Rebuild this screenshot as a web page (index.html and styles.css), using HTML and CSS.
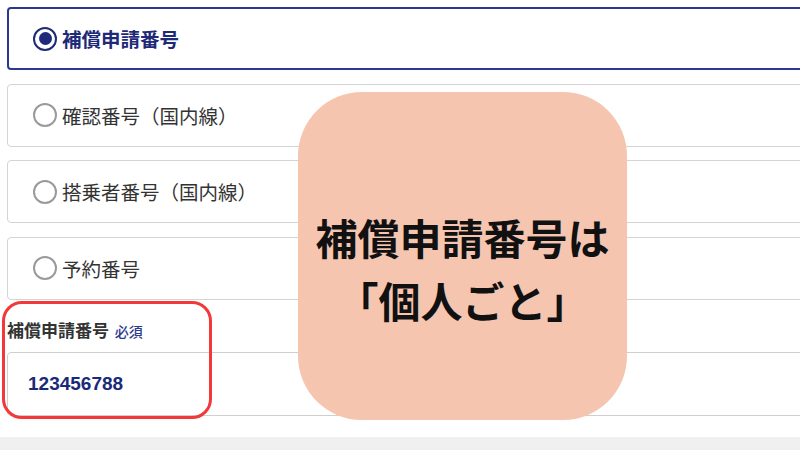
FILE: index.html
```html
<!DOCTYPE html>
<html lang="ja">
  <head>
    <meta charset="UTF-8" />
    <meta name="viewport" content="width=device-width, initial-scale=1.0" />
    <title>補償申請番号</title>
    <link rel="stylesheet" href="styles.css">
  </head>
  <body>
    <div class="page">
      <div class="form-area">
        <div class="options">
          <label class="option selected">
            <span class="radio checked"></span>
            <span class="option-text">補償申請番号</span>
          </label>
          <label class="option">
            <span class="radio"></span>
            <span class="option-text">確認番号（国内線）</span>
          </label>
          <label class="option">
            <span class="radio"></span>
            <span class="option-text">搭乗者番号（国内線）</span>
          </label>
          <label class="option">
            <span class="radio"></span>
            <span class="option-text">予約番号</span>
          </label>
        </div>

        <div class="field">
          <div class="field-label">補償申請番号 <span class="required">必須</span></div>
          <div class="input-box">123456788</div>
        </div>
      </div>
      <div class="footer-band"></div>

      <!-- annotations over the screenshot -->
      <div class="highlight-box"></div>
      <div class="note-bubble">
        <p>補償申請番号は<br>「個人ごと」</p>
      </div>
    </div>
  </body>
</html>
```

FILE: styles.css
```css
body {
  margin: 0;
  font-family: "Noto Sans CJK JP", "Noto Sans", sans-serif;
  background: #ffffff;
}
.page {
  position: relative;
  width: 800px;
  height: 450px;
  overflow: hidden;
}
.form-area {
  height: 437px;
  padding: 7px 0 0 7px;
  box-sizing: border-box;
}
.options {
  display: flex;
  flex-direction: column;
  gap: 13.5px;
  margin-right: -30px;
}
.option {
  display: flex;
  align-items: center;
  height: 63px;
  box-sizing: border-box;
  border: 1px solid #d4d4d4;
  border-radius: 4px;
  padding-left: 25px;
  color: #333;
  font-size: 19.5px;
}
.option.selected {
  border: 2px solid #2b3a8f;
  padding-left: 24px;
  color: #1e2a78;
  font-weight: 700;
}
.radio {
  width: 24px;
  height: 24px;
  box-sizing: border-box;
  border: 2px solid #9a9a9a;
  border-radius: 50%;
  margin-right: 5px;
  flex-shrink: 0;
  display: flex;
  align-items: center;
  justify-content: center;
}
.radio.checked {
  border: 2.5px solid #1e2a78;
}
.radio.checked::after {
  content: "";
  width: 13px;
  height: 13px;
  border-radius: 50%;
  background: #1e2a78;
}
.field {
  margin-top: 18px;
  margin-right: -30px;
}
.field-label {
  font-size: 17px;
  font-weight: 700;
  color: #333;
  line-height: 23px;
}
.required {
  font-size: 14px;
  color: #2b3a8f;
  font-weight: 500;
  margin-left: 2px;
}
.input-box {
  margin-top: 9px;
  height: 64px;
  box-sizing: border-box;
  border: 1px solid #cfcfcf;
  border-radius: 4px;
  display: flex;
  align-items: center;
  padding-left: 20px;
  font-family: "Liberation Sans", Arial, sans-serif;
  font-weight: 700;
  font-size: 19px;
  color: #1a2a7a;
}
.footer-band {
  height: 13px;
  background: #f0f0f0;
}
.highlight-box {
  position: absolute;
  left: 2px;
  top: 301px;
  width: 210px;
  height: 118px;
  box-sizing: border-box;
  border: 3.5px solid #f23838;
  border-radius: 20px;
}
.note-bubble {
  position: absolute;
  left: 298px;
  top: 92px;
  width: 329px;
  height: 328px;
  border-radius: 64px;
  background: #f5c5b0;
  display: flex;
  align-items: center;
  justify-content: center;
  padding-top: 24px;
  box-sizing: border-box;
}
.note-bubble p {
  margin: 0;
  text-align: center;
  font-size: 42px;
  font-weight: 700;
  line-height: 63px;
  color: #111;
}
```
